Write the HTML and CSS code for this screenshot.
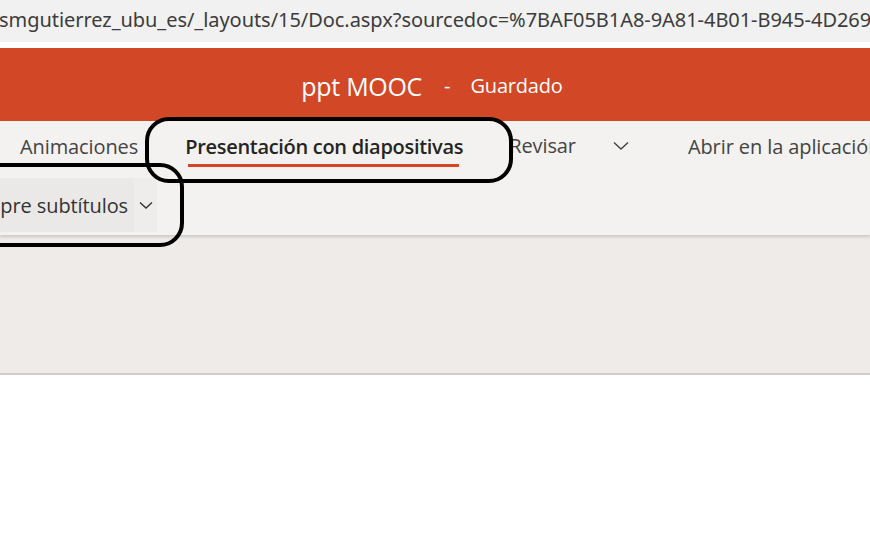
FILE: index.html
```html
<!DOCTYPE html>
<html lang="es">
<head>
    <meta charset="UTF-8">
    <meta name="viewport" content="width=device-width, initial-scale=1.0">
    <title>ppt MOOC</title>
    <link rel="stylesheet" href="styles.css">
</head>
<body>

<div class="urlbar">smgutierrez_ubu_es/_layouts/15/Doc.aspx?sourcedoc=%7BAF05B1A8-9A81-4B01-B945-4D269</div>

<div class="app">
    <header class="titlebar">
        <span class="doc-name">ppt MOOC</span>
        <span class="dash">-</span>
        <span class="status">Guardado</span>
    </header>

    <nav class="tabs">
        <span class="tab tab-anim">Animaciones</span>
        <span class="tab tab-active">Presentación con diapositivas</span>
        <span class="tab tab-review">Revisar</span>
        <span class="tab-more">
            <svg width="16" height="10" viewBox="0 0 16 10"><path d="M1 1.5 L8 8 L15 1.5" fill="none" stroke="#444" stroke-width="1.4"/></svg>
        </span>
        <span class="tab tab-open">Abrir en la aplicación</span>
    </nav>

    <div class="ribbon">
        <div class="split-btn">
            <span class="split-main">Siempre subtítulos</span>
            <span class="split-arrow">
                <svg width="14" height="9" viewBox="0 0 14 9"><path d="M1 1.5 L7 7 L13 1.5" fill="none" stroke="#333" stroke-width="1.4"/></svg>
            </span>
        </div>
    </div>

    <div class="workspace"></div>

    <!-- annotation marks drawn over the ribbon -->
    <div class="mark mark-tab"></div>
    <div class="mark mark-btn"></div>
</div>

</body>
</html>
```

FILE: styles.css
```css
body {
    margin: 0;
    background-color: #ffffff;
    font-family: "Open Sans", "Noto Sans", sans-serif;
    overflow: hidden;
}

.urlbar {
    height: 42px;
    line-height: 40px;
    background-color: #f1f1f1;
    color: #3c3c3c;
    font-size: 20px;
    font-family: "Noto Sans", sans-serif;
    letter-spacing: -0.05px;
    white-space: nowrap;
    overflow: hidden;
    text-indent: -1px;
    border-bottom: 6px solid #ffffff;
}

.app {
    position: relative;
}

.titlebar {
    height: 73px;
    background-color: #d24726;
    color: #ffffff;
    display: flex;
    align-items: center;
    justify-content: center;
    padding-top: 2px;
    padding-right: 6px;
    box-sizing: border-box;
}

.doc-name {
    font-size: 25px;
    letter-spacing: -0.3px;
}

.dash {
    font-size: 20px;
    margin: 0 20px 0 22px;
}

.status {
    font-size: 20px;
    letter-spacing: -0.2px;
}

.tabs {
    height: 54px;
    background-color: #f3f2f1;
    display: flex;
    align-items: center;
    white-space: nowrap;
    overflow: hidden;
    color: #444444;
    font-size: 20px;
    padding-bottom: 4px;
    box-sizing: border-box;
}

.tab {
    position: relative;
    letter-spacing: -0.1px;
}

.tab-anim {
    margin-left: 20px;
}

.tab-active {
    margin-left: 47px;
    font-weight: 600;
    color: #252423;
    letter-spacing: -0.3px;
}

.tab-active::after {
    content: "";
    position: absolute;
    left: 3px;
    right: 4px;
    bottom: -7px;
    height: 3px;
    background-color: #d24726;
}

.tab-review {
    margin-left: 46px;
    margin-top: -2px;
}

.tab-more {
    margin-left: 37px;
    display: flex;
}

.tab-open {
    margin-left: 59px;
}

.ribbon {
    height: 60px;
    background-color: #f3f2f1;
    display: flex;
    align-items: center;
    box-shadow: 0 2px 3px rgba(0, 0, 0, 0.15);
    position: relative;
}

.split-btn {
    display: flex;
    height: 54px;
    margin-left: -50px;
}

.split-main {
    background-color: #ebe9e7;
    display: flex;
    align-items: center;
    padding-left: 5px;
    width: 179px;
    font-size: 20px;
    color: #333333;
    letter-spacing: -0.1px;
    white-space: nowrap;
}

.split-arrow {
    width: 23px;
    background-color: #efedeb;
    display: flex;
    align-items: center;
    justify-content: center;
}

.workspace {
    height: 138px;
    background-color: #eeebe8;
    border-bottom: 2px solid #cfcdcb;
}

.mark {
    position: absolute;
    border: 4px solid #000000;
    border-radius: 24px;
    box-sizing: border-box;
}

.mark-tab {
    left: 145px;
    top: 69px;
    width: 368px;
    height: 66px;
}

.mark-btn {
    left: -40px;
    top: 115px;
    width: 224px;
    height: 84px;
}
```
